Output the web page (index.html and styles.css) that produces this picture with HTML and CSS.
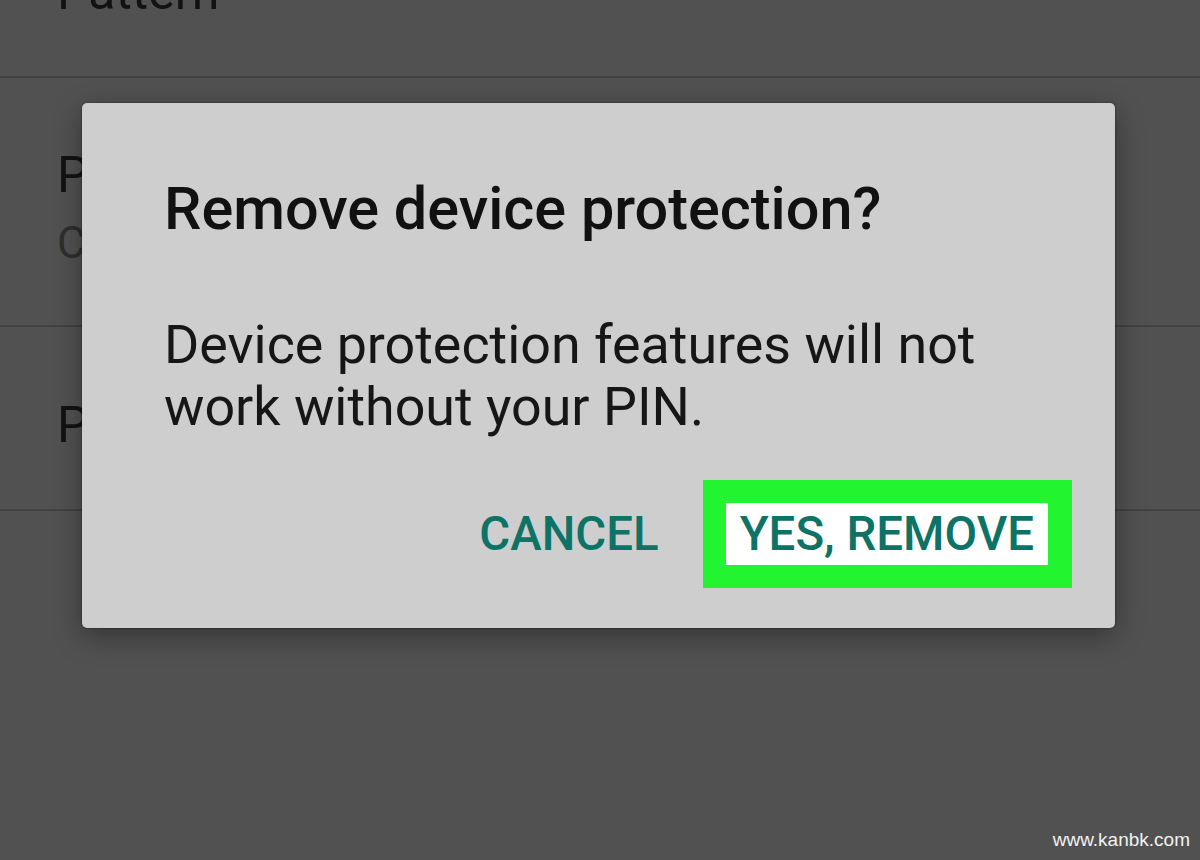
FILE: index.html
```html
<!DOCTYPE html>
<html lang="en">
<head>
<meta charset="utf-8">
<title>Remove device protection?</title>
<link rel="stylesheet" href="styles.css">
</head>
<body>
<div class="screen">
  <div class="list">
    <div class="row row-first">
      <div class="row-title">Pattern</div>
    </div>
    <div class="row row-second">
      <div class="row-title">PIN</div>
      <div class="row-sub">Current screen lock</div>
    </div>
    <div class="row row-third">
      <div class="row-title">Password</div>
    </div>
  </div>

  <div class="dialog">
    <div class="dialog-title">Remove device protection?</div>
    <div class="dialog-body">Device protection features will not work without your PIN.</div>
    <div class="dialog-actions">
      <div class="btn btn-cancel">CANCEL</div>
      <div class="highlight">
        <div class="btn btn-yes">YES, REMOVE</div>
      </div>
    </div>
  </div>

  <div class="watermark">www.kanbk.com</div>
</div>
</body>
</html>
```

FILE: styles.css
```css
html, body {
  margin: 0;
  padding: 0;
}
body {
  background: #515151;
  font-family: Roboto, "Noto Sans", sans-serif;
}
.screen {
  position: relative;
  width: 1200px;
  height: 860px;
  overflow: hidden;
  background: #515151;
}
.list {
  margin-top: -110px;
  display: flex;
  flex-direction: column;
}
.row {
  box-sizing: border-box;
  padding-left: 57px;
  border-bottom: 2px solid #414141;
  white-space: nowrap;
}
.row-first {
  height: 188px;
  padding-top: 77px;
}
.row-second {
  height: 249px;
  padding-top: 72px;
}
.row-third {
  height: 184px;
  padding-top: 73px;
}
.row-title {
  font-size: 50px;
  line-height: 50px;
  color: #121212;
}
.row-sub {
  margin-top: 18px;
  font-size: 44px;
  line-height: 50px;
  color: #2e2e2e;
}

.dialog {
  position: absolute;
  left: 82px;
  top: 103px;
  width: 1033px;
  box-sizing: border-box;
  padding: 76px 43px 40px 82px;
  background: #cecece;
  border-radius: 5px;
  box-shadow: 0 0 2px rgba(0,0,0,0.6), 0 8px 28px rgba(0,0,0,0.35);
}
.dialog-title {
  font-size: 59.4px;
  line-height: 60px;
  font-weight: 500;
  color: #111;
  white-space: nowrap;
}
.dialog-body {
  margin-top: 75px;
  font-size: 53.8px;
  line-height: 62px;
  color: #161616;
  width: 880px;
}
.dialog-actions {
  margin-top: 42px;
  display: flex;
  justify-content: flex-end;
  align-items: center;
  gap: 30px;
}
.btn {
  font-size: 47.4px;
  line-height: 62px;
  font-weight: 500;
  color: #0d7366;
  padding: 0 14px;
  white-space: nowrap;
}
.highlight {
  background: #22f430;
  padding: 23px 24px 23px 23px;
}
.btn-yes {
  background: #ffffff;
}
.watermark {
  position: absolute;
  right: 10px;
  bottom: 9px;
  font-family: "Liberation Sans", Arial, sans-serif;
  font-size: 19px;
  color: #f2f2f2;
}
```
